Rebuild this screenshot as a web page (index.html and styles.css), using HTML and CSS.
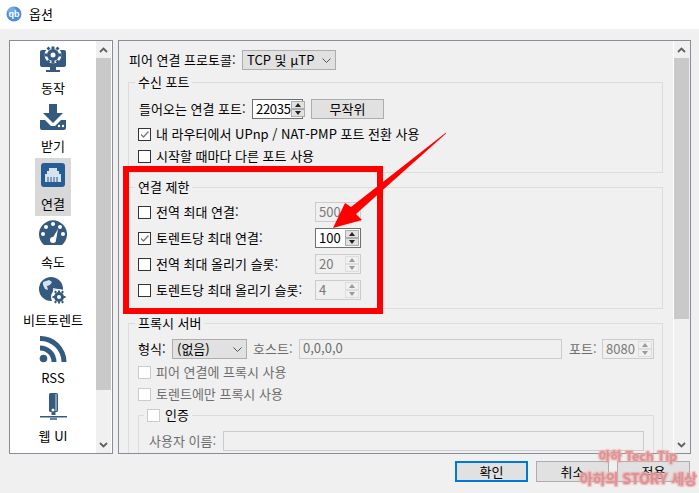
FILE: index.html
```html
<!DOCTYPE html>
<html lang="ko">
<head>
<meta charset="utf-8">
<title>옵션</title>
<link rel="stylesheet" href="styles.css">
</head>
<body>
<div class="app">
  <header class="titlebar">
    <svg class="logo" viewBox="0 0 16 16"><circle cx="8" cy="8" r="7.5" fill="#4a8fdc"/><circle cx="6" cy="5" r="4" fill="#8fbdf0" opacity=".6"/><text x="8" y="11" text-anchor="middle" class="logo-text">qb</text></svg>
    <span class="title">옵션</span>
  </header>
  <main class="main">
    <nav class="sidebar">
      <div class="side-list">
        <div class="side-item"><svg class="side-icon" viewBox="0 0 28 28"><rect x="1" y="5" width="26" height="17" rx="2" fill="#345a80"/><path d="M11 22h6v3h4v2H7v-2h4z" fill="#345a80"/><circle cx="14" cy="10" r="8.5" fill="#fff"/><circle cx="14" cy="10" r="6" fill="#345a80"/><path d="M12.5 1.5h3v3h-3zM12.5 15.5h3v3h-3zM5.500 8.500h3v3h-3zM19.500 8.500h3v3h-3zM7.500 3.500l2-2 2 2-2 2zM16.500 3.500l2-2 2 2-2 2zM7.500 16.500l2-2 2 2-2 2zM16.500 16.500l2-2 2 2-2 2z" fill="#345a80"/><circle cx="14" cy="10" r="2.500" fill="#fff"/></svg><span>동작</span></div>
        <div class="side-item"><svg class="side-icon" viewBox="0 0 28 28"><path d="M10 1h8v9h6l-10 10L4 10h6z" fill="#345a80"/><path d="M1 17h5l6 6h4l6-6h5v8a2 2 0 0 1-2 2H3a2 2 0 0 1-2-2z" fill="#345a80"/><circle cx="20" cy="23" r="1.200" fill="#fff"/><circle cx="24" cy="23" r="1.200" fill="#fff"/></svg><span>받기</span></div>
        <div class="side-item selected"><svg class="side-icon" viewBox="0 0 28 28"><rect x="2" y="2" width="24" height="24" rx="3" fill="#265d94"/><path d="M10 7h8v3h2v3h2v8H6v-8h2v-3h2z" fill="#d8e2ee"/><path d="M9 16v5M12 16v5M15 16v5M18 16v5" stroke="#265d94" stroke-width="1"/></svg><span>연결</span></div>
        <div class="side-item"><svg class="side-icon" viewBox="0 0 28 28"><path d="M5 26A14 14 0 1 1 23 26z" fill="#345a80"/><g fill="#fff"><circle cx="14" cy="5" r="2"/><circle cx="7" cy="8" r="2"/><circle cx="21" cy="8" r="2"/><circle cx="4" cy="15" r="2"/><circle cx="24" cy="15" r="2"/><circle cx="14" cy="21" r="3"/></g><path d="M13 20l6-10 -2 11z" fill="#fff"/></svg><span>속도</span></div>
        <div class="side-item"><svg class="side-icon" viewBox="0 0 28 28"><circle cx="12" cy="12" r="12" fill="#345a80"/><path d="M4 5l6-2 3 2-2 3-3 1 1 4-3-1-2-4zM14 11l5 1 1 3-3 6-3-3z" fill="#d8e2ee"/><circle cx="20" cy="20" r="8" fill="#fff"/><circle cx="20" cy="20" r="5" fill="#345a80"/><path d="M19 13.500h2v2h-2zM19 24.500h2v2h-2zM13.500 19h2v2h-2zM24.500 19h2v2h-2zM15 15l1.500-1.500L18 15l-1.500 1.500zM22 15l1.500-1.500L25 15l-1.500 1.500zM15 25l1.500-1.500L18 25l-1.500 1.500zM22 25l1.500-1.500L25 25l-1.500 1.500z" fill="#345a80"/><circle cx="20" cy="20" r="2" fill="#fff"/></svg><span>비트토렌트</span></div>
        <div class="side-item"><svg class="side-icon" viewBox="0 0 28 28"><circle cx="4.500" cy="23.500" r="3.800" fill="#345a80"/><path d="M1 10.500A16.500 16.500 0 0 1 17.500 27h-5A11.500 11.500 0 0 0 1 15.500z" fill="#345a80"/><path d="M1 1a26 26 0 0 1 26.500 26h-5A21 21 0 0 0 1 6z" fill="#345a80"/></svg><span>RSS</span></div>
        <div class="side-item"><svg class="side-icon" viewBox="0 0 28 28"><rect x="10" y="0" width="9" height="19" rx="1.500" fill="#345a80"/><path d="M14 1v17" stroke="#fff" stroke-width=".8" transform="translate(3 0)"/><circle cx="14" cy="17" r="1.500" fill="#fff"/><path d="M12.500 19h4v3h-4z" fill="#345a80"/><path d="M1 23h27v1.500H1z" fill="#345a80"/><path d="M11 24.500h7V27h-7z" fill="#6b86a3"/></svg><span>웹 UI</span></div>
      </div>
      <div class="scrollbar">
        <span class="arrow"><svg viewBox="0 0 9 6" class="chev"><path d="M1 5l3.500-3.500L8 5" fill="none" stroke="#606060" stroke-width="1.800"/></svg></span>
        <span class="thumb thumb-side"></span>
        <span class="track"></span>
        <span class="arrow"><svg viewBox="0 0 9 6" class="chev"><path d="M1 1l3.500 3.500L8 1" fill="none" stroke="#606060" stroke-width="1.800"/></svg></span>
      </div>
    </nav>

    <section class="panel">
      <div class="content">
        <div class="row row-proto">
          <label class="lbl-proto">피어 연결 프로토콜:</label>
          <div class="combo combo-proto"><span>TCP 및 µTP</span><svg class="combo-chev" viewBox="0 0 9 5"><path d="M.5.5l4 4 4-4" fill="none" stroke="#555"/></svg></div>
        </div>

        <fieldset class="group group-listen">
          <legend>수신 포트</legend>
          <div class="row row-port">
            <label class="lbl-port">들어오는 연결 포트:</label>
            <div class="spin spin-port focus-none"><span class="spin-val">22035</span><span class="spin-btns"><i class="up"></i><i class="down"></i></span></div>
            <button class="btn btn-random">무작위</button>
          </div>
          <div class="row check-row check-first"><span class="check on"><svg viewBox="0 0 11 11"><path d="M2 5.500l2.500 2.500L9.500 2.500" fill="none" stroke="#777" stroke-width="1.300"/></svg></span><span>내 라우터에서 UPnp / NAT-PMP 포트 전환 사용</span></div>
          <div class="row check-row"><span class="check"></span><span>시작할 때마다 다른 포트 사용</span></div>
        </fieldset>

        <fieldset class="group group-limit">
          <legend>연결 제한</legend>
          <div class="row limit-row"><span class="check"></span><span class="limit-label">전역 최대 연결:</span><div class="spin spin-limit off"><span class="spin-val">500</span><span class="spin-btns"><i class="up"></i><i class="down"></i></span></div></div>
          <div class="row limit-row"><span class="check on"><svg viewBox="0 0 11 11"><path d="M2 5.500l2.500 2.500L9.500 2.500" fill="none" stroke="#777" stroke-width="1.300"/></svg></span><span class="limit-label">토렌트당 최대 연결:</span><div class="spin spin-limit"><span class="spin-val">100</span><span class="spin-btns"><i class="up"></i><i class="down"></i></span></div></div>
          <div class="row limit-row"><span class="check"></span><span class="limit-label">전역 최대 올리기 슬롯:</span><div class="spin spin-limit off"><span class="spin-val">20</span><span class="spin-btns"><i class="up"></i><i class="down"></i></span></div></div>
          <div class="row limit-row"><span class="check"></span><span class="limit-label">토렌트당 최대 올리기 슬롯:</span><div class="spin spin-limit off"><span class="spin-val">4</span><span class="spin-btns"><i class="up"></i><i class="down"></i></span></div></div>
        </fieldset>

        <fieldset class="group group-proxy">
          <legend>프록시 서버</legend>
          <div class="row row-proxy">
            <label class="lbl-type">형식:</label>
            <div class="combo combo-type"><span>(없음)</span><svg class="combo-chev" viewBox="0 0 9 5"><path d="M.5.5l4 4 4-4" fill="none" stroke="#555"/></svg></div>
            <label class="lbl-host dim">호스트:</label>
            <div class="field field-host dim">0,0,0,0</div>
            <label class="lbl-pport dim">포트:</label>
            <div class="spin spin-proxy off"><span class="spin-val">8080</span><span class="spin-btns"><i class="up"></i><i class="down"></i></span></div>
          </div>
          <div class="row check-row check-tight dim"><span class="check off"></span><span>피어 연결에 프록시 사용</span></div>
          <div class="row check-row dim"><span class="check off"></span><span>토렌트에만 프록시 사용</span></div>
          <fieldset class="group group-auth">
            <legend class="legend-check"><span class="check off"></span><span>인증</span></legend>
            <div class="row row-user dim"><label>사용자 이름:</label><div class="field field-user"></div></div>
          </fieldset>
        </fieldset>
      </div>
      <div class="scrollbar">
        <span class="arrow"><svg viewBox="0 0 9 6" class="chev"><path d="M1 5l3.500-3.500L8 5" fill="none" stroke="#606060" stroke-width="1.800"/></svg></span>
        <span class="thumb thumb-panel"></span>
        <span class="track"></span>
        <span class="arrow"><svg viewBox="0 0 9 6" class="chev"><path d="M1 1l3.500 3.500L8 1" fill="none" stroke="#606060" stroke-width="1.800"/></svg></span>
      </div>
    </section>
  </main>
  <footer class="footer">
    <button class="btn btn-foot primary">확인</button>
    <button class="btn btn-foot">취소</button>
    <button class="btn btn-foot">적용</button>
  </footer>

  <div class="red-box"></div>
  <svg class="red-arrow" viewBox="0 0 699 493"><path d="M446 132.500L351 207 345 203 333 228 362 220 356 214 446 133.500z" fill="#fe0000"/></svg>
  <div class="watermark"><span class="wm-1">아하 Tech Tip</span><span class="wm-2">아하의 STORY 세상</span></div>
</div>
</body>
</html>
```

FILE: styles.css
```css
* { box-sizing: border-box; }
html, body { margin: 0; padding: 0; }
body {
  width: 699px;
  height: 493px;
  overflow: hidden;
  background: #f0f0f0;
  color: #000;
  font-family: "Noto Sans CJK KR", "Noto Sans", sans-serif;
  font-size: 13px;
  line-height: 14px;
}
.app { position: relative; width: 699px; height: 493px; display: flex; flex-direction: column; }

.titlebar { height: 29px; background: #fff; display: flex; align-items: center; gap: 7px; padding: 0 0 2px 6px; flex: none; }
.logo { width: 16px; height: 16px; }
.logo-text { font-size: 9px; font-weight: 700; fill: #fff; font-family: "Liberation Sans", sans-serif; }
.title { font-size: 13px; }

.main { height: 425px; flex: none; display: flex; gap: 5px; padding: 11px 8px 0 9px; }
.sidebar, .panel { height: 414px; border: 1px solid #888e99; display: flex; }
.sidebar { width: 104px; background: #fff; flex: none; }
.panel { flex: 1; min-width: 0; overflow: hidden; }

.side-list { flex: 1; display: flex; flex-direction: column; align-items: center; padding-top: 1px; min-width: 0; }
.side-item { width: 36px; height: 58px; display: flex; flex-direction: column; align-items: center; padding-top: 3px; gap: 8px; white-space: nowrap; flex: none; }
.side-item.selected { background: #d8d8d8; }
.side-icon { width: 28px; height: 28px; flex: none; }

.scrollbar { width: 15px; margin-right: 1px; background: #f0f0f0; display: flex; flex-direction: column; flex: none; border-left: 0; }
.arrow { height: 17px; display: flex; align-items: center; justify-content: center; flex: none; }
.chev { width: 9px; height: 6px; }
.thumb { background: #c9c9c9; flex: none; display: block; }
.thumb-side { height: 332px; }
.thumb-panel { height: 261px; }
.track { flex: 1; }

.content { flex: 1; min-width: 0; padding: 9px 10px 0 9px; background: #f0f0f0; border-right: 1px solid #fff; overflow: hidden; }
.row { display: flex; align-items: center; }
.lbl-proto { width: 114px; padding-left: 1px; white-space: nowrap; }
.combo { height: 20px; background: #e1e1e1; border: 1px solid #adadad; display: flex; align-items: center; justify-content: space-between; padding: 0 4px 0 4px; }
.combo-proto { width: 94px; }
.combo-chev { width: 9px; height: 5px; }

.group { margin: 0; padding: 0; border: 1px solid #dcdcdc; min-width: 0; }
.group legend { margin-left: -3px; padding: 0 3px; line-height: 14px; }
.group-listen { margin-top: 5px; height: 98px; padding: 10px 0 0 9px; }
.row-port { height: 20px; gap: 0; }
.lbl-port { width: 114px; padding-left: 1px; white-space: nowrap; }
.spin { height: 20px; background: #fff; border: 1px solid #6f6f6f; display: flex; justify-content: space-between; align-items: center; padding: 1px 1px 1px 3px; }
.spin-port { width: 51px; letter-spacing: -.3px; }
.spin-limit { width: 46px; }
.spin-proxy { width: 52px; }
.spin.off { background: #f0f0f0; border-color: #ccc; color: #7a7a7a; }
.spin-btns { width: 14px; height: 16px; display: flex; flex-direction: column; gap: 0; flex: none; }
.spin-btns i { flex: 1; background: #e1e1e1; border: 1px solid #adadad; display: block; position: relative; }
.spin-btns i::after { content: ""; position: absolute; left: 3px; width: 0; height: 0; border-left: 3px solid transparent; border-right: 3px solid transparent; }
.spin-btns .up::after { top: 1px; border-bottom: 4px solid #222; }
.spin-btns .down::after { top: 1px; border-top: 4px solid #222; }
.spin.off .spin-btns i { background: #f0f0f0; border-color: #ddd; }
.spin.off .spin-btns .up::after { border-bottom-color: #999; }
.spin.off .spin-btns .down::after { border-top-color: #999; }

.btn { font: inherit; color: #000; background: #e1e1e1; border: 1px solid #adadad; padding: 0; }
.btn-random { width: 73px; height: 20px; margin-left: 8px; }

.check { width: 13px; height: 13px; background: #fff; border: 1px solid #333; flex: none; display: block; }
.check svg { display: block; width: 11px; height: 11px; }
.check.off { border-color: #ccc; }
.check-row { height: 14px; gap: 5px; margin-top: 8px; }
.check-first { margin-top: 8px; }
.check-tight { margin-top: 6px; }
.dim { color: #6d6d6d; }

.group-limit { margin-top: 7px; height: 129px; padding: 8px 0 0 9px; }
.limit-row { height: 20px; margin-bottom: 6px; }
.limit-label { width: 164px; padding-left: 5px; white-space: nowrap; }

.group-proxy { margin-top: 7px; height: 180px; padding: 9px 0 0 9px; }
.row-proxy { height: 20px; }
.row-proxy label { white-space: nowrap; flex: none; }
.lbl-type { width: 34px; }
.combo-type { width: 75px; margin-right: 6px; }
.lbl-host { width: 46px; }
.lbl-pport { width: 33px; }
.field { height: 20px; background: #f0f0f0; border: 1px solid #ccc; padding: 1px 3px; }
.field-host { width: 263px; margin-right: 7px; }
.group-auth { width: 516px; margin-top: 7px; padding: 9px 0 0 10px; height: 60px; margin-left: 0; }
.group-auth .legend-check { display: flex; align-items: center; gap: 5px; margin-left: -5px; }
.row-user label { width: 74px; white-space: nowrap; }
.field-user { width: 421px; }

.footer { flex: 1; display: flex; justify-content: flex-end; gap: 8px; padding: 7px 9px 0 0; }
.btn-foot { width: 73px; height: 21px; }
.btn-foot.primary { border: 2px solid #0078d7; }

.red-box { position: absolute; left: 123px; top: 166px; width: 260px; height: 148px; border: 6px solid #fe0000; }
.red-arrow { position: absolute; left: 0; top: 0; width: 699px; height: 493px; pointer-events: none; }
.watermark { position: absolute; left: 560px; top: 444px; width: 139px; display: flex; flex-direction: column; align-items: flex-end; font-weight: 700; font-size: 14px; line-height: 23px; color: rgba(185, 140, 140, .65); text-shadow: 0 0 2px rgba(247, 170, 170, .8), 1px 1px 1px rgba(247, 170, 170, .7), -1px -1px 1px rgba(247, 170, 170, .7), 1px -1px 1px rgba(247, 170, 170, .7), -1px 1px 1px rgba(247, 170, 170, .7); white-space: nowrap; }
.wm-1 { margin-right: 22px; font-size: 12.5px; }
.wm-2 { margin-right: 2px; }
```
